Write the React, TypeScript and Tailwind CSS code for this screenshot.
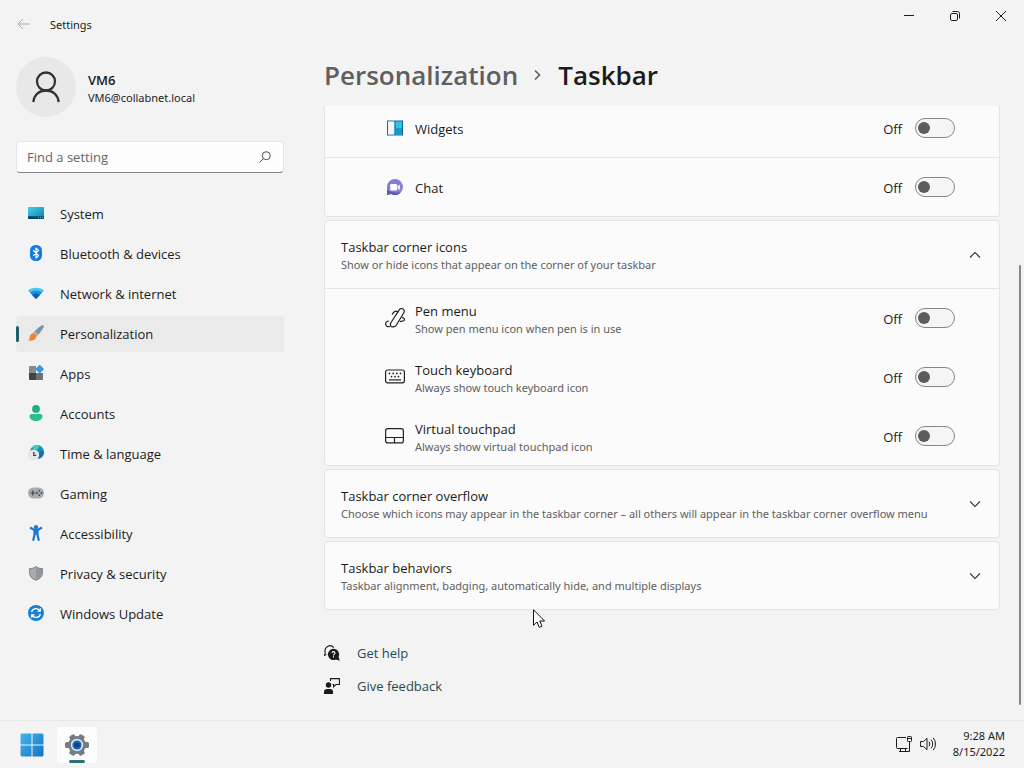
import { useState, type ReactNode } from "react";

function BackIcon() {
  return (
    <svg width="14" height="12" viewBox="0 0 14 12" fill="none" stroke="currentColor" strokeWidth="1">
      <path d="M6 1 L1 6 L6 11 M1 6 H13" />
    </svg>
  );
}

function MinimizeIcon() {
  return (
    <svg width="10" height="10" viewBox="0 0 10 10" fill="none" stroke="currentColor">
      <path d="M0 4.5 H10" />
    </svg>
  );
}

function RestoreIcon() {
  return (
    <svg width="10" height="10" viewBox="0 0 10 10" fill="none" stroke="currentColor">
      <rect x="0.5" y="2.5" width="7" height="7" rx="1.4" />
      <path d="M2.5 0.5 H7.3 A2.2 2.2 0 0 1 9.5 2.7 V7.5" />
    </svg>
  );
}

function CloseIcon() {
  return (
    <svg width="10" height="10" viewBox="0 0 10 10" fill="none" stroke="currentColor">
      <path d="M0 0 L10 10 M10 0 L0 10" />
    </svg>
  );
}

function PersonIcon() {
  return (
    <svg width="28" height="32" viewBox="0 0 28 32" fill="none" stroke="#333" strokeWidth="2.3">
      <circle cx="14" cy="10.5" r="9" />
      <path d="M1.3 31 C2.3 23.5 7.5 19.5 14 19.5 S25.7 23.5 26.7 31" />
    </svg>
  );
}

function SearchIcon() {
  return (
    <svg width="12" height="12" viewBox="0 0 12 12" fill="none" stroke="#4a4a4a" strokeWidth="1">
      <circle cx="7.3" cy="4.7" r="4" />
      <path d="M4.4 7.6 L0.6 11.4" />
    </svg>
  );
}

function SystemIcon() {
  return (
    <svg width="16" height="16" viewBox="0 0 16 16">
      <defs>
        <linearGradient id="sys" x1="0" y1="0" x2="1" y2="1">
          <stop offset="0" stopColor="#45cfe6" />
          <stop offset="1" stopColor="#0a82b4" />
        </linearGradient>
      </defs>
      <rect x="0" y="2" width="16" height="12" rx="1" fill="url(#sys)" />
      <path d="M0 11.3 H16 V13 A1 1 0 0 1 15 14 H1 A1 1 0 0 1 0 13 Z" fill="#0b4264" />
      <path d="M10 12.6 H11 M12 12.6 H13 M14 12.6 H15" stroke="#9cdcf0" strokeWidth="0.8" />
    </svg>
  );
}

function BluetoothIcon() {
  return (
    <svg width="16" height="16" viewBox="0 0 16 16">
      <rect x="2" y="0" width="12" height="16" rx="5.5" fill="#147ae8" />
      <path d="M5.2 5.3 L10.6 10.6 L8 13 V3 L10.6 5.4 L5.2 10.7" fill="none" stroke="#fff" strokeWidth="1.2" strokeLinejoin="round" />
    </svg>
  );
}

function NetworkIcon() {
  return (
    <svg width="16" height="16" viewBox="0 0 16 16">
      <path d="M8 14 L0.3 6 C0 5.5 0.1 5.2 0.5 4.9 C5 2 11 2 15.5 4.9 C15.9 5.2 16 5.5 15.7 6 Z" fill="#4cc5ee" />
      <path d="M8 14 L1.9 7.5 C5.5 4.8 10.5 4.8 14.1 7.5 Z" fill="#1f8fdd" />
      <path d="M8 14 L4.2 10 C6.5 8 9.5 8 11.8 10 Z" fill="#1159b5" />
    </svg>
  );
}

function BrushIcon() {
  return (
    <svg width="16" height="16" viewBox="0 0 16 16">
      <path d="M14.2 0.3 C15.4 0 16.2 0.9 15.7 2 C14.3 5 11.5 8.7 8.5 11.3 L5.2 8 C8 4.8 11.5 1.3 14.2 0.3 Z" fill="#7893a5" />
      <path d="M6.7 6.3 L10.2 9.7 L8.5 11.3 L5.2 8 Z" fill="#b4bfc6" />
      <path d="M5.5 8.2 C7.5 8.4 8.7 9.9 8.4 11.8 C8 14.8 4.5 16.5 0.3 15.3 C2 14.2 1.4 12.5 2.1 10.6 C2.7 9 4 8.1 5.5 8.2 Z" fill="#ed8437" />
    </svg>
  );
}

function AppsIcon() {
  return (
    <svg width="16" height="16" viewBox="0 0 16 16">
      <path d="M1 2 A1 1 0 0 1 2 1 H8 V8 H1 Z" fill="#84898d" />
      <path d="M1 8 H8 V15 H2 A1 1 0 0 1 1 14 Z" fill="#404448" />
      <path d="M8 8 H15 V14 A1 1 0 0 1 14 15 H8 Z" fill="#6d7276" />
      <rect x="8.6" y="1" width="6.2" height="6.2" rx="0.8" transform="rotate(45 11.7 4.1)" fill="#3a96e0" />
    </svg>
  );
}

function AccountsIcon() {
  return (
    <svg width="16" height="16" viewBox="0 0 16 16">
      <circle cx="8" cy="3.9" r="3.9" fill="#20ad80" />
      <path d="M3.5 9 H12.5 A2 2 0 0 1 14.5 11 C14.5 14.5 11.5 16 8 16 S1.5 14.5 1.5 11 A2 2 0 0 1 3.5 9 Z" fill="#2ebd91" />
    </svg>
  );
}

function TimeIcon() {
  return (
    <svg width="16" height="16" viewBox="0 0 16 16">
      <circle cx="9" cy="7" r="7" fill="#1991ae" />
      <path d="M4 2.2 C6.5 0 10 -0.5 12 0.8 C10 2 11 4 9 4.8 C6.5 5 5.5 4.5 4 2.2 Z" fill="#43cec7" />
      <path d="M12.5 6 C14 5.3 15.3 5.8 16 7.5 C15.6 10.5 14 12.8 11 13.7 C11.5 11 10.8 8 12.5 6 Z" fill="#196db1" />
      <circle cx="5.6" cy="10" r="5.5" fill="#e9e6e8" />
      <path d="M5.8 7 V10.4 H8.2" fill="none" stroke="#444" strokeWidth="1.3" />
    </svg>
  );
}

function GamingIcon() {
  return (
    <svg width="16" height="16" viewBox="0 0 16 16">
      <rect x="0" y="2.5" width="16" height="11" rx="5.5" fill="#a5adb2" />
      <path d="M4.8 5.5 V10.5 M2.3 8 H7.3" stroke="#42474b" strokeWidth="1.2" />
      <g fill="#42474b">
        <circle cx="9" cy="8" r="0.9" />
        <circle cx="11.2" cy="5.8" r="0.9" />
        <circle cx="11.2" cy="10.2" r="0.9" />
        <circle cx="13.4" cy="8" r="0.9" />
      </g>
    </svg>
  );
}

function AccessibilityIcon() {
  return (
    <svg width="16" height="16" viewBox="0 0 16 16">
      <circle cx="8" cy="2.2" r="2.1" fill="#1c79cc" />
      <path d="M2.8 3 L6 4.8 H10 L13.2 3 M6.5 5 H9.5 V9.5 L10.6 14.8 M6.5 5 V9.5 L5.4 14.8" fill="none" stroke="#1c79cc" strokeWidth="2.2" strokeLinecap="round" strokeLinejoin="round" />
      <path d="M6 5 H10 V10 L8 9.8 L6 10 Z" fill="#1c79cc" />
    </svg>
  );
}

function ShieldIcon() {
  return (
    <svg width="16" height="16" viewBox="0 0 16 16">
      <path d="M8 1 C10 2.6 12.2 3.1 15 3.2 V7.5 C15 11.5 12 14.3 8 15.8 C4 14.3 1 11.5 1 7.5 V3.2 C3.8 3.1 6 2.6 8 1 Z" fill="#84898d" />
      <path d="M8 2.3 C9.8 3.6 11.7 4.1 14 4.2 V7.5 C14 10.8 11.3 13.4 8 14.7 C4.7 13.4 2 10.8 2 7.5 V4.2 C4.3 4.1 6.2 3.6 8 2.3 Z" fill="#a9adb1" />
      <path d="M8 2.3 C9.8 3.6 11.7 4.1 14 4.2 V7.5 C14 10.8 11.3 13.4 8 14.7 Z" fill="#93979b" />
    </svg>
  );
}

function UpdateIcon() {
  return (
    <svg width="16" height="16" viewBox="0 0 16 16">
      <circle cx="8" cy="8" r="8" fill="#1b80d0" />
      <path d="M3.6 7 A4.6 4.6 0 0 1 12 5.8 M12.3 3.3 V6.2 H9.4 M12.4 9 A4.6 4.6 0 0 1 4 10.2 M3.7 12.7 V9.8 H6.6" fill="none" stroke="#fff" strokeWidth="1.3" />
    </svg>
  );
}

function WidgetsIcon() {
  return (
    <svg width="16" height="16" viewBox="0 0 16 16">
      <rect x="0.5" y="1" width="15" height="14" fill="#35bfe0" stroke="#126a9c" />
      <rect x="1" y="1.5" width="6.5" height="13" fill="#eef7fb" />
      <rect x="8.5" y="8" width="6.5" height="6.5" fill="#1c9ac6" />
      <path d="M8 1 V15" stroke="#126a9c" />
    </svg>
  );
}

function ChatIcon() {
  return (
    <svg width="16" height="16" viewBox="0 0 16 16">
      <path d="M8 0 A8 8 0 1 1 4.2 15.1 L0 16 V8 A8 8 0 0 1 8 0 Z" fill="#8280d2" />
      <path d="M0 10.5 C3 13.6 8 13.6 14 13.2 A8 8 0 0 1 4.2 15.1 L0 16 Z" fill="#5d5bb0" />
      <rect x="3.2" y="5" width="7" height="6.4" rx="1.2" fill="#fff" />
      <path d="M10.8 7.2 L12.8 5.5 V10.9 L10.8 9.2 Z" fill="#fff" />
    </svg>
  );
}

function PenIcon() {
  return (
    <svg width="20" height="20" viewBox="0 0 20 20" fill="none" stroke="#222" strokeWidth="1.2" strokeLinecap="round" strokeLinejoin="round">
      <path d="M6.2 18.6 C5.2 17.4 5.3 15.6 6.2 14.2 L14.2 1.9 A2.6 2.6 0 0 1 18.8 4.7 L11.3 17.2 C10.3 18.8 8.2 19.2 6.2 18.6 Z" />
      <path d="M13 3.8 C11.3 2.7 9.3 3.2 8.2 4.9 L7.3 6.3" />
      <path d="M3.5 13 C1.7 13.3 0.6 14.4 0.6 16.1 C0.6 18 2.4 18.9 4.4 18.6" />
      <path d="M17.4 9.6 C19.3 10 20 11.5 18.9 12.6 C18 13.4 16.4 13 15.4 13.6" />
    </svg>
  );
}

function KeyboardIcon() {
  return (
    <svg width="20" height="20" viewBox="0 0 20 20" fill="none" stroke="#222" strokeWidth="1.2">
      <rect x="0.6" y="3" width="18.8" height="12.8" rx="2" />
      <path d="M4 12.9 H16" />
      <g fill="#222" stroke="none">
        <circle cx="4.5" cy="6.4" r="0.9" />
        <circle cx="8.2" cy="6.4" r="0.9" />
        <circle cx="11.8" cy="6.4" r="0.9" />
        <circle cx="15.5" cy="6.4" r="0.9" />
        <circle cx="6.5" cy="9.6" r="0.9" />
        <circle cx="10" cy="9.6" r="0.9" />
        <circle cx="13.5" cy="9.6" r="0.9" />
      </g>
    </svg>
  );
}

function TouchpadIcon() {
  return (
    <svg width="20" height="20" viewBox="0 0 20 20" fill="none" stroke="#222" strokeWidth="1.2">
      <rect x="0.6" y="2.6" width="17.8" height="14.3" rx="2.2" />
      <path d="M0.6 11.5 H18.4 M9.5 11.5 V17" />
    </svg>
  );
}

function ChevronIcon({ up = false }: { up?: boolean }) {
  return (
    <svg width="12" height="12" viewBox="0 0 12 12" fill="none" stroke="#333" strokeWidth="1.1">
      <path d={up ? "M1 8.5 L6 3.5 L11 8.5" : "M1 3.5 L6 8.5 L11 3.5"} />
    </svg>
  );
}

function HelpIcon() {
  return (
    <svg width="16" height="16" viewBox="0 0 16 16">
      <path d="M0.7 10.5 L1.2 7.3 A5 5 0 0 1 9.8 2.6" fill="none" stroke="#1b1b1b" strokeWidth="1.1" />
      <path d="M0 10.5 L2.5 9.5" stroke="#1b1b1b" />
      <path d="M9.5 3.8 A5.6 5.6 0 0 1 14.6 11.8 L15.7 15.8 L11.8 14.5 A5.6 5.6 0 1 1 9.5 3.8 Z" fill="#1b1b1b" />
      <path d="M7.9 7.9 C8 6.2 11 6.2 11 8 C11 9.2 9.5 9 9.5 10.4 M9.5 11.3 V12.4" fill="none" stroke="#f3f3f3" strokeWidth="1.1" />
    </svg>
  );
}

function FeedbackIcon() {
  return (
    <svg width="16" height="16" viewBox="0 0 16 16">
      <circle cx="4.5" cy="7" r="2.7" fill="#1b1b1b" />
      <path d="M0 16 V14 A3 3 0 0 1 3 11 H6 A3 3 0 0 1 9 14 V16 Z" fill="#1b1b1b" />
      <path d="M6.5 3 V0.6 H15.4 V6.5 H12 L9.6 8.8 V6.5 H8.5" fill="none" stroke="#1b1b1b" strokeWidth="1.1" />
    </svg>
  );
}

function StartIcon() {
  return (
    <svg width="24" height="24" viewBox="0 0 24 24">
      <defs>
        <linearGradient id="start" x1="0" y1="0" x2="1" y2="1">
          <stop offset="0" stopColor="#45b6ec" />
          <stop offset="1" stopColor="#1372c4" />
        </linearGradient>
      </defs>
      <path d="M1.5 0.5 H11.5 V11.5 H0.5 V1.5 Z M12.5 0.5 H22.5 L23.5 1.5 V11.5 H12.5 Z M0.5 12.5 H11.5 V23.5 H1.5 L0.5 22.5 Z M12.5 12.5 H23.5 V22.5 L22.5 23.5 H12.5 Z" fill="url(#start)" />
    </svg>
  );
}

function GearIcon() {
  return (
    <svg width="24" height="24" viewBox="0 0 24 24">
      <g fill="#777c80">
        <circle cx="12" cy="12" r="9" />
        <rect x="9" y="0.7" width="6" height="22.6" rx="1.5" transform="rotate(30 12 12)" />
        <rect x="9" y="0" width="6" height="24" rx="1.5" transform="rotate(90 12 12)" />
        <rect x="9" y="0.7" width="6" height="22.6" rx="1.5" transform="rotate(150 12 12)" />
      </g>
      <circle cx="12" cy="12" r="6.2" fill="#d8e6ef" />
      <circle cx="12" cy="12" r="4.6" fill="#1668b5" />
      <circle cx="12" cy="12" r="2.6" fill="#0d4386" />
    </svg>
  );
}

function EthernetIcon() {
  return (
    <svg width="16" height="16" viewBox="0 0 16 16" fill="none" stroke="#1b1b1b">
      <path d="M10 1.5 H1.5 A1 1 0 0 0 0.5 2.5 V11.5 A1 1 0 0 0 1.5 12.5 H11.5 M4.5 12.5 V15.5 M9.5 12.5 V15.5 M3 15.5 H12" />
      <rect x="11.5" y="0.5" width="4" height="5" rx="0.8" />
      <path d="M11.5 2.5 H15.5 M13.5 5.5 V15.5 H12" />
    </svg>
  );
}

function VolumeIcon() {
  return (
    <svg width="17" height="16" viewBox="0 0 17 16" fill="none" stroke="#1b1b1b" strokeLinejoin="round" strokeLinecap="round">
      <path d="M0.8 5.5 H3.5 L7 2.3 V13.7 L3.5 10.5 H0.8 Z" />
      <path d="M9.2 6 A3.2 3.2 0 0 1 9.2 10 M11.3 4 A6 6 0 0 1 11.3 12 M13.4 2.2 A8.6 8.6 0 0 1 13.4 13.8" />
    </svg>
  );
}

const navItems: { label: string; icon: ReactNode }[] = [
  { label: "System", icon: <SystemIcon /> },
  { label: "Bluetooth & devices", icon: <BluetoothIcon /> },
  { label: "Network & internet", icon: <NetworkIcon /> },
  { label: "Personalization", icon: <BrushIcon /> },
  { label: "Apps", icon: <AppsIcon /> },
  { label: "Accounts", icon: <AccountsIcon /> },
  { label: "Time & language", icon: <TimeIcon /> },
  { label: "Gaming", icon: <GamingIcon /> },
  { label: "Accessibility", icon: <AccessibilityIcon /> },
  { label: "Privacy & security", icon: <ShieldIcon /> },
  { label: "Windows Update", icon: <UpdateIcon /> },
];

function Toggle({ id, label }: { id: string; label: string }) {
  const [on, setOn] = useState(false);
  return (
    <label htmlFor={id} className="flex items-center gap-[13px]">
      <span className="pt-0.5 leading-[18px]">{on ? "On" : "Off"}</span>
      <input
        id={id}
        type="checkbox"
        role="switch"
        aria-label={label}
        checked={on}
        onChange={(e) => setOn(e.target.checked)}
        className="flex h-5 w-10 appearance-none items-center rounded-full border border-[#868686] bg-[#f5f5f5] px-0.5 before:size-3 before:rounded-full before:bg-[#5c5c5c] checked:justify-end checked:bg-[#1f5f66] checked:before:bg-white"
      />
    </label>
  );
}

function ToggleRow({ id, icon, title, detail, className }: { id: string; icon: ReactNode; title: string; detail?: string; className: string }) {
  return (
    <div className={`flex items-center pr-11 pl-[60px] ${className}`}>
      <span className="flex w-[30px] shrink-0 items-center">{icon}</span>
      <div className="flex-1 pt-0.5">
        <div className="leading-5">{title}</div>
        {detail && <div className="font-['Noto_Sans',sans-serif] text-[11px] leading-4 text-[#606060]">{detail}</div>}
      </div>
      <Toggle id={id} label={title} />
    </div>
  );
}

function ExpanderHeader({ title, detail, open = false }: { title: string; detail: string; open?: boolean }) {
  return (
    <button type="button" aria-expanded={open} className="flex h-[67px] w-full items-center pr-[18px] pl-4 text-left">
      <span className="flex-1">
        <span className="block leading-5">{title}</span>
        <span className="block font-['Noto_Sans',sans-serif] text-[11px] leading-4 text-[#606060]">{detail}</span>
      </span>
      <ChevronIcon up={open} />
    </button>
  );
}

export default function App() {
  return (
    <div className="relative flex min-h-screen flex-col bg-[#f3f3f3] font-['Open_Sans','Noto_Sans',sans-serif] text-[13px] text-[#1b1b1b]">
      <header className="flex h-12 items-start justify-between">
        <div className="flex h-12 items-center gap-[19px] pl-[17px]">
          <button type="button" aria-label="Back" className="text-[#a8a8a8]">
            <BackIcon />
          </button>
          <span className="pt-0.5 font-['Noto_Sans',sans-serif] text-[11px]">Settings</span>
        </div>
        <div className="flex">
          <button type="button" aria-label="Minimize" className="flex h-8 w-[46px] items-center justify-center">
            <MinimizeIcon />
          </button>
          <button type="button" aria-label="Restore" className="flex h-8 w-[46px] items-center justify-center">
            <RestoreIcon />
          </button>
          <button type="button" aria-label="Close" className="flex h-8 w-[46px] items-center justify-center">
            <CloseIcon />
          </button>
        </div>
      </header>

      <div className="flex flex-1">
        <aside className="w-[300px] shrink-0 px-4 pt-[9px]">
          <div className="flex items-center gap-3">
            <span className="flex size-[60px] items-center justify-center rounded-full bg-[#e8e8e8]">
              <PersonIcon />
            </span>
            <div className="pt-0.5">
              <div className="leading-5 font-semibold">VM6</div>
              <div className="font-['Noto_Sans',sans-serif] text-[11px] leading-4">VM6@collabnet.local</div>
            </div>
          </div>

          <label className="mt-6 flex h-8 items-center rounded border border-[#e4e4e4] border-b-[#868686] bg-[#fdfdfd] pr-3 pl-2.5">
            <input
              type="text"
              aria-label="Find a setting"
              placeholder="Find a setting"
              className="min-w-0 flex-1 bg-transparent pt-0.5 outline-none placeholder:text-[#666]"
            />
            <SearchIcon />
          </label>

          <nav className="mt-[23px] flex flex-col gap-1">
            {navItems.map(({ label, icon }) => {
              const active = label === "Personalization";
              return (
                <a
                  key={label}
                  href="#"
                  aria-current={active ? "page" : undefined}
                  className={`flex h-9 items-center rounded ${active ? "bg-[#eaeaea]" : ""}`}
                >
                  <span className={`h-4 w-[3px] rounded-full ${active ? "bg-[#1f5f66]" : ""}`} />
                  <span className="ml-[9px] pb-0.5">{icon}</span>
                  <span className="ml-4 pt-0.5">{label}</span>
                </a>
              );
            })}
          </nav>
        </aside>

        <main className="min-w-0 flex-1 px-6">
          <h1 className="flex h-[58px] items-center pb-1 text-[26px] leading-9 font-semibold">
            <a href="#" className="text-[#5f5f5f]">Personalization</a>
            <svg className="mx-3.5" width="12" height="12" viewBox="0 0 12 12" fill="none" stroke="#5f5f5f" strokeWidth="1.6">
              <path d="M3 1.5 L7.5 6 L3 10.5" />
            </svg>
            <span>Taskbar</span>
          </h1>

          <section className="rounded-b border border-t-0 border-[#e5e5e5] bg-[#fbfbfb]">
            <ToggleRow id="widgets" className="h-[52px] border-b border-[#e5e5e5] pb-[7px]" icon={<span className="pl-0.5"><WidgetsIcon /></span>} title="Widgets" />
            <ToggleRow id="chat" className="h-[58px]" icon={<span className="pl-0.5"><ChatIcon /></span>} title="Chat" />
          </section>

          <section className="mt-[3px] rounded border border-[#e5e5e5] bg-[#fbfbfb]">
            <ExpanderHeader open title="Taskbar corner icons" detail="Show or hide icons that appear on the corner of your taskbar" />
            <div className="border-t border-[#e5e5e5]">
              <ToggleRow id="pen" className="h-[58px]" icon={<PenIcon />} title="Pen menu" detail="Show pen menu icon when pen is in use" />
              <ToggleRow id="keyboard" className="h-[59px]" icon={<KeyboardIcon />} title="Touch keyboard" detail="Always show touch keyboard icon" />
              <ToggleRow id="touchpad" className="h-[59px]" icon={<TouchpadIcon />} title="Virtual touchpad" detail="Always show virtual touchpad icon" />
            </div>
          </section>

          <section className="mt-[3px] rounded border border-[#e5e5e5] bg-[#fbfbfb]">
            <ExpanderHeader title="Taskbar corner overflow" detail="Choose which icons may appear in the taskbar corner – all others will appear in the taskbar corner overflow menu" />
          </section>

          <section className="mt-[3px] rounded border border-[#e5e5e5] bg-[#fbfbfb]">
            <ExpanderHeader title="Taskbar behaviors" detail="Taskbar alignment, badging, automatically hide, and multiple displays" />
          </section>

          <div className="mt-[26px] flex flex-col items-start text-[#1f4a52]">
            <a href="#" className="flex h-[33px] items-center gap-[17px]">
              <HelpIcon />
              <span className="pt-0.5">Get help</span>
            </a>
            <a href="#" className="flex h-[33px] items-center gap-[17px]">
              <FeedbackIcon />
              <span className="pt-0.5">Give feedback</span>
            </a>
          </div>
        </main>
      </div>

      <footer className="flex h-12 items-center justify-between border-t border-[#e8e8e8] bg-[#f3f3f3] pr-[19px] pl-5">
        <div className="flex items-center gap-[13px]">
          <button type="button" aria-label="Start">
            <StartIcon />
          </button>
          <button type="button" aria-label="Settings" className="flex h-9 w-10 flex-col items-center justify-between rounded bg-[#fcfcfc] pt-1.5">
            <GearIcon />
            <span className="h-[3px] w-4 rounded-full bg-[#2b7078]" />
          </button>
        </div>
        <div className="flex items-center pb-0.5 text-[11px] leading-4">
          <EthernetIcon />
          <span className="ml-2">
            <VolumeIcon />
          </span>
          <div className="ml-4 text-right font-['Noto_Sans',sans-serif]">
            <div>9:28 AM</div>
            <div>8/15/2022</div>
          </div>
        </div>
      </footer>

      <div className="absolute top-[265px] right-[3px] h-[440px] w-0.5 rounded-full bg-[#868686]" />
      <svg className="absolute top-[609px] left-[533px]" width="13" height="20" viewBox="0 0 13 20">
        <path d="M0.5 0.8 V16.3 L4 13 L6.3 18.3 L9 17.1 L6.8 12 H11.6 Z" fill="#fff" stroke="#111" />
      </svg>
    </div>
  );
}
